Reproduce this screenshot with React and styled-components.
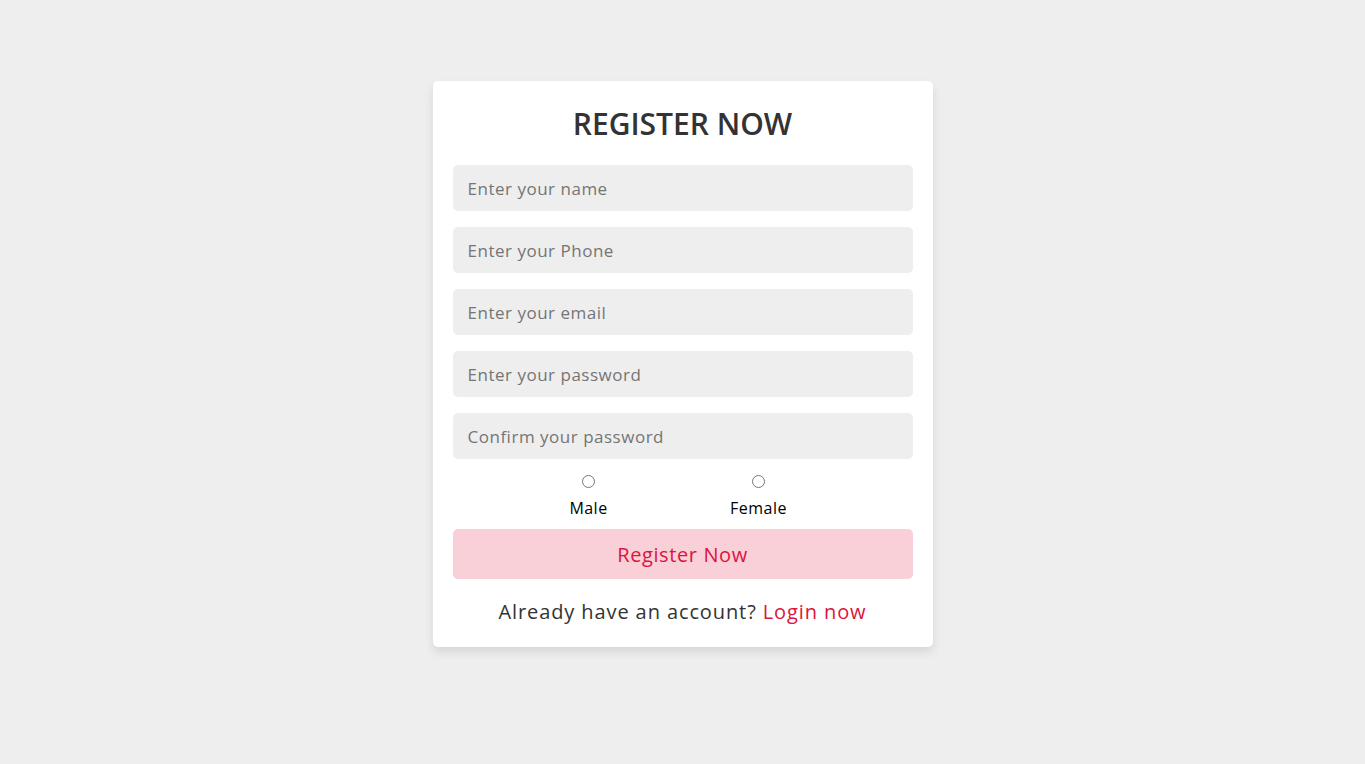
import React from "react";
import styled, { createGlobalStyle } from "styled-components";

const Global = createGlobalStyle`
  * { box-sizing: border-box; }
  html, body { margin: 0; padding: 0; }
  body {
    background: #eeeeee;
    font-family: "Open Sans", "Liberation Sans", sans-serif;
  }
`;

const Page = styled.div`
  min-height: 764px;
  display: flex;
  justify-content: center;
  align-items: flex-start;
  padding-top: 81px;
`;

const Card = styled.form`
  width: 500px;
  background: #fff;
  border-radius: 5px;
  padding: 20px;
  box-shadow: 0 5px 10px rgba(0, 0, 0, 0.1);
  text-align: center;
  display: flex;
  flex-direction: column;
`;

const Title = styled.h3`
  margin: 0 0 19px;
  font-size: 30px;
  line-height: 45px;
  font-weight: 600;
  color: #333;
  text-transform: uppercase;
`;

const Fields = styled.div`
  display: flex;
  flex-direction: column;
  gap: 16px;
`;

const Field = styled.input`
  display: block;
  width: 100%;
  height: 46px;
  margin: 0;
  padding: 0 15px;
  border: none;
  outline: none;
  border-radius: 5px;
  background: #eee;
  font-family: inherit;
  font-size: 17px;
  letter-spacing: 0.03em;
  color: #333;
  &::placeholder { color: #757575; }
`;

const Gender = styled.div`
  display: flex;
  justify-content: center;
  margin-top: 16px;
  padding-left: 2px;
`;

const Option = styled.label`
  width: 150px;
  margin-right: 20px;
  display: flex;
  flex-direction: column;
  align-items: center;
  gap: 8px;
  font-size: 16px;
  line-height: 24px;
  letter-spacing: 0.03em;
  color: #000;
  input { margin: 0; width: 13px; height: 13px; }
`;

const Button = styled.button`
  display: block;
  width: 100%;
  height: 50px;
  margin-top: 9px;
  border: none;
  border-radius: 5px;
  background: #f9cfd8;
  color: crimson;
  font-family: inherit;
  font-size: 20px;
  letter-spacing: 0.03em;
  cursor: pointer;
`;

const Footer = styled.p`
  margin: 18px 0 0;
  font-size: 20px;
  line-height: 30px;
  letter-spacing: 0.045em;
  color: #333;
  a { color: crimson; text-decoration: none; }
`;

export default function App() {
  return (
    <>
      <Global />
      <Page>
        <Card onSubmit={(e) => e.preventDefault()}>
          <Title>Register Now</Title>
          <Fields>
            <Field placeholder="Enter your name" />
            <Field placeholder="Enter your Phone" />
            <Field placeholder="Enter your email" />
            <Field type="password" placeholder="Enter your password" />
            <Field type="password" placeholder="Confirm your password" />
          </Fields>
          <Gender>
            <Option>
              <input type="radio" name="gender" />
              Male
            </Option>
            <Option>
              <input type="radio" name="gender" />
              Female
            </Option>
          </Gender>
          <Button type="submit">Register Now</Button>
          <Footer>
            Already have an account? <a href="#">Login now</a>
          </Footer>
        </Card>
      </Page>
    </>
  );
}
